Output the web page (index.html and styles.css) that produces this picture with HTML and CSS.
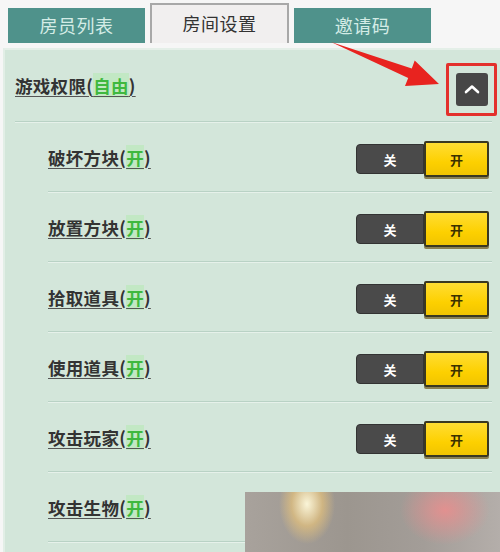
FILE: index.html
```html
<!DOCTYPE html>
<html lang="zh">
<head>
<meta charset="utf-8">
<link rel="stylesheet" href="styles.css">
</head>
<body>
<div class="page">
  <div class="tabs">
    <div class="tab">房员列表</div>
    <div class="tab active">房间设置</div>
    <div class="tab">邀请码</div>
  </div>
  <div class="panel">
    <div class="head">
      <span class="label">游戏权限(<em>自由</em>)</span>
      <div class="frame"><div class="collapse"><svg width="16" height="10" viewBox="0 0 16 10"><path d="M2 8 L8 2.5 L14 8" fill="none" stroke="#fff" stroke-width="2.6" stroke-linecap="round" stroke-linejoin="round"/></svg></div></div>
    </div>
    <div class="sep wide"></div>
    <div class="row"><span class="label">破坏方块(<em>开</em>)</span><div class="toggle"><span class="off">关</span><span class="on">开</span></div></div>
    <div class="sep"></div>
    <div class="row"><span class="label">放置方块(<em>开</em>)</span><div class="toggle"><span class="off">关</span><span class="on">开</span></div></div>
    <div class="sep"></div>
    <div class="row"><span class="label">拾取道具(<em>开</em>)</span><div class="toggle"><span class="off">关</span><span class="on">开</span></div></div>
    <div class="sep"></div>
    <div class="row"><span class="label">使用道具(<em>开</em>)</span><div class="toggle"><span class="off">关</span><span class="on">开</span></div></div>
    <div class="sep"></div>
    <div class="row"><span class="label">攻击玩家(<em>开</em>)</span><div class="toggle"><span class="off">关</span><span class="on">开</span></div></div>
    <div class="sep"></div>
    <div class="row"><span class="label">攻击生物(<em>开</em>)</span></div>
    <div class="sep"></div>
  </div>
  <svg class="arrow" width="500" height="120" viewBox="0 0 500 120"><polygon points="331,42 411.8,68.5 414.7,60.5 439,84 405,86 408.2,77.9" fill="#e8231f"/></svg>
  <div class="mark"></div>
</div>
</body>
</html>
```
FILE: styles.css
```css
html, body { margin: 0; padding: 0; }
body {
  width: 500px; height: 552px; overflow: hidden;
  background: #f6f6f6;
  font-family: "Noto Sans CJK SC", "Noto Sans", sans-serif;
}
.page {
  position: relative; width: 500px; height: 552px; overflow: hidden;
  display: flex; flex-direction: column;
}
.tabs {
  display: flex; gap: 5px;
  padding: 5px 0 0 8px;
  height: 43px; box-sizing: border-box; flex: none;
  align-items: flex-end;
}
.tab {
  width: 137px; height: 35px;
  background: #4f928b; color: #d4ece6;
  font-size: 18px; display: flex; align-items: center; justify-content: center;
  box-sizing: border-box; padding-bottom: 2px; letter-spacing: 0.5px;
}
.tab.active {
  width: 139px; height: 40px;
  background: #f1efef; color: #333;
  border: 2px solid #a8a8a8; border-bottom: none;
}
.panel {
  flex: 1; min-height: 0; overflow: hidden;
  margin-left: 3px; margin-top: 5px;
  background: #d3e6da;
  border-top: 2px solid #e4efe8;
  border-left: 2px solid #e2eee6;
}
.head {
  height: 71px; display: flex; align-items: center; justify-content: space-between;
  padding: 0 3px 0 10px;
}
.label {
  font-size: 17.5px; color: #333; font-weight: 700; letter-spacing: 0.3px;
  text-decoration: underline; text-decoration-color: #555; text-underline-offset: 3px;
  text-decoration-thickness: 1px;
}
.label em { font-style: normal; color: #3fb83f; background: #c2e8c4; }
.frame {
  width: 51px; height: 53px; box-sizing: border-box;
  border: 3px solid #e3302c; border-radius: 2px;
  display: flex; align-items: center; justify-content: center;
  margin-top: 7px;
}
.collapse {
  width: 32px; height: 33px; background: #474747; border-radius: 3px;
  display: flex; align-items: center; justify-content: center;
}
.sep {
  height: 1px; background: #b9d2c5; border-bottom: 1px solid #e6f1ea;
  margin: 0 8px 0 43px;
}
.sep.wide { margin-left: 10px; }
.row {
  height: 68px; display: flex; align-items: center; justify-content: space-between;
  padding: 0 11px 0 43px;
}
.toggle { display: flex; align-items: center; margin-top: 4px; }
.off {
  width: 68px; height: 30px; box-sizing: border-box;
  background: #4a4a4a; color: #fff; border: 1px solid #333; border-radius: 4px 0 0 4px;
  display: flex; align-items: center; justify-content: center; font-size: 13px; font-weight: 700;
}
.on {
  width: 65px; height: 36px; box-sizing: border-box;
  background: linear-gradient(#ffdd33, #fdd000 60%, #f1c400);
  color: #3a3000; border: 2px solid #3a3820; border-radius: 2px;
  box-shadow: 0 2px 0 #8a8050;
  display: flex; align-items: center; justify-content: center; font-size: 13px; font-weight: 700;
}
.arrow { position: absolute; left: 0; top: 0; pointer-events: none; }
.mark {
  position: absolute; left: 245px; top: 492px; width: 255px; height: 60px;
  background:
    radial-gradient(ellipse 28px 40px at 62px 12px, rgba(255,250,220,0.95), rgba(240,200,120,0.6) 55%, rgba(240,200,120,0) 100%),
    radial-gradient(ellipse 45px 35px at 200px 18px, rgba(240,140,140,0.8), rgba(220,150,150,0) 100%),
    linear-gradient(90deg, #a8a29c, #9c968f 40%, #a39d98 70%, #b4aeaa);
}
```
